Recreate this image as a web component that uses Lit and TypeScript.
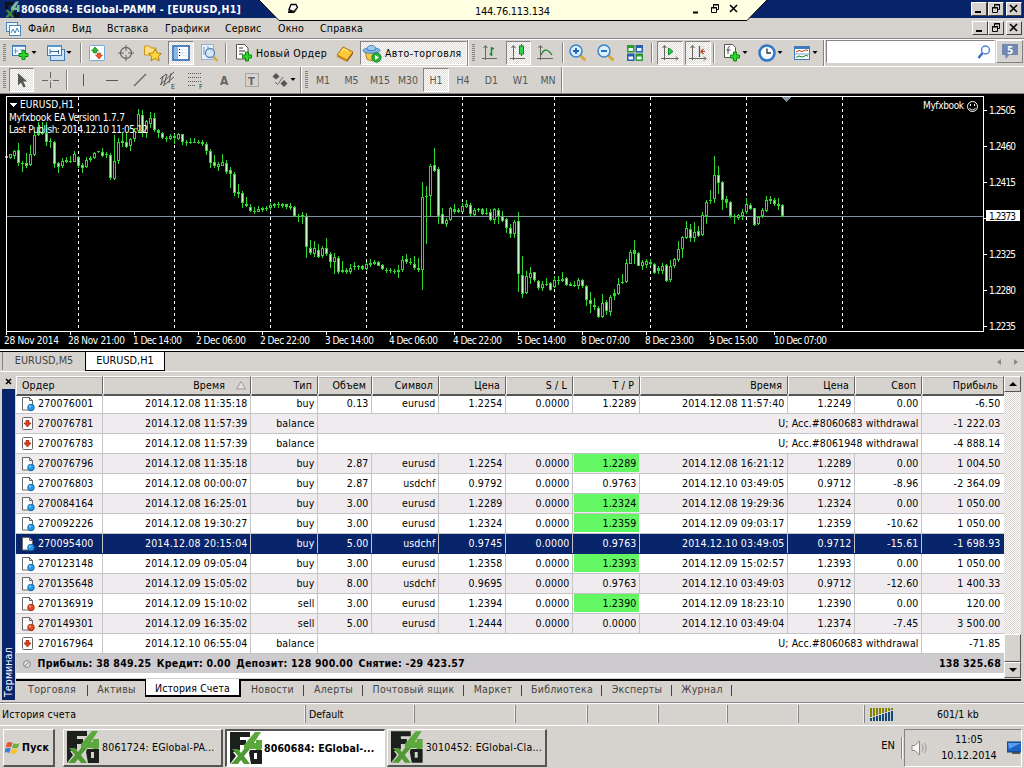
import { LitElement, html, svg, css, TemplateResult } from "lit";
import { customElement } from "lit/decorators.js";
import { classMap } from "lit/directives/class-map.js";
import { styleMap } from "lit/directives/style-map.js";

interface Order {
  id: string;
  kind: "buy" | "sell" | "balance";
  time: string;
  profit: string;
  comment?: string;
  cells?: string[]; // volume, symbol, price, s/l, t/p, close time, close price, swap
  tpHit?: boolean;
  selected?: boolean;
}

const deal = (
  id: string, kind: "buy" | "sell", time: string, cells: string[], profit: string,
  flags: Partial<Order> = {},
): Order => ({ id, kind, time, cells, profit, ...flags });

const balance = (id: string, time: string, comment: string, profit: string): Order =>
  ({ id, kind: "balance", time, comment, profit });

const ORDERS: Order[] = [
  deal("270076001", "buy", "2014.12.08 11:35:18", ["0.13", "eurusd", "1.2254", "0.0000", "1.2289", "2014.12.08 11:57:40", "1.2249", "0.00"], "-6.50"),
  balance("270076781", "2014.12.08 11:57:39", "U; Acc.#8060683 withdrawal", "-1 222.03"),
  balance("270076783", "2014.12.08 11:57:39", "U; Acc.#8061948 withdrawal", "-4 888.14"),
  deal("270076796", "buy", "2014.12.08 11:35:18", ["2.87", "eurusd", "1.2254", "0.0000", "1.2289", "2014.12.08 16:21:12", "1.2289", "0.00"], "1 004.50", { tpHit: true }),
  deal("270076803", "buy", "2014.12.08 00:00:07", ["2.87", "usdchf", "0.9792", "0.0000", "0.9763", "2014.12.10 03:49:05", "0.9712", "-8.96"], "-2 364.09"),
  deal("270084164", "buy", "2014.12.08 16:25:01", ["3.00", "eurusd", "1.2289", "0.0000", "1.2324", "2014.12.08 19:29:36", "1.2324", "0.00"], "1 050.00", { tpHit: true }),
  deal("270092226", "buy", "2014.12.08 19:30:27", ["3.00", "eurusd", "1.2324", "0.0000", "1.2359", "2014.12.09 09:03:17", "1.2359", "-10.62"], "1 050.00", { tpHit: true }),
  deal("270095400", "buy", "2014.12.08 20:15:04", ["5.00", "usdchf", "0.9745", "0.0000", "0.9763", "2014.12.10 03:49:05", "0.9712", "-15.61"], "-1 698.93", { selected: true }),
  deal("270123148", "buy", "2014.12.09 09:05:04", ["3.00", "eurusd", "1.2358", "0.0000", "1.2393", "2014.12.09 15:02:57", "1.2393", "0.00"], "1 050.00", { tpHit: true }),
  deal("270135648", "buy", "2014.12.09 15:05:02", ["8.00", "usdchf", "0.9695", "0.0000", "0.9763", "2014.12.10 03:49:03", "0.9712", "-12.60"], "1 400.33"),
  deal("270136919", "sell", "2014.12.09 15:10:02", ["3.00", "eurusd", "1.2394", "0.0000", "1.2390", "2014.12.09 18:23:10", "1.2390", "0.00"], "120.00", { tpHit: true }),
  deal("270149301", "sell", "2014.12.09 16:35:02", ["5.00", "eurusd", "1.2444", "0.0000", "0.0000", "2014.12.10 03:49:04", "1.2374", "-7.45"], "3 500.00"),
  balance("270167964", "2014.12.10 06:55:04", "U; Acc.#8060683 withdrawal", "-71.85"),
];

// high, body top, body bottom, low (three units per pixel), then u/d for a hollow/solid body
const CANDLES = `
190 194 200 204,186 188 200 202 u,176 178 192 202 u,153 175 214 223 d,208 213 215 240,185 213 222 230 d,
160 188 220 222 u,118 130 190 194 u,92 122 130 134,90 122 126 130,90 125 150 162 d,140 148 152 168,
147 150 216 230 d,212 214 227 245 d,198 207 224 228 u,197 205 210 214,192 207 211 213,177 187 211 212 u,
192 195 222 228 d,214 221 228 245 d,196 205 226 230 u,193 198 205 212,180 184 200 202 u,177 178 182 184,
170 180 192 196 d,180 187 191 198,184 189 258 264 d,130 207 262 264 u,140 150 207 216 u,122 149 153 167,
122 152 166 170 d,138 142 164 178 u,110 118 142 152 u,52 66 118 124 u,54 70 125 136 d,84 88 124 140 u,
60 80 96 108 u,64 80 116 120 d,112 116 124 138,120 124 138 142 d,132 138 141 150,128 132 142 144 u,
126 134 140 156,124 128 142 146 u,126 128 150 160 d,144 150 154 162,140 151 153 158,138 150 153 153,
144 150 153 156,145 150 158 162,152 156 178 190 d,172 178 214 230 d,190 212 224 228 d,212 218 226 238 u,
188 212 222 224 u,204 214 240 246 d,226 236 248 288 d,240 246 304 314 d,276 302 306 320,298 304 334 350 d,
316 336 344 346 d,338 346 358 362 d,346 358 360 366,342 352 360 362 u,346 350 354 362,344 350 352 358,
334 340 350 354 u,334 338 342 350,332 338 340 350,334 338 342 348,336 338 346 352,334 344 348 354,
342 346 374 376 d,366 372 376 390,360 370 374 398,364 372 466 498 d,444 468 484 490 d,448 468 488 496 u,
458 474 496 500 d,462 468 494 498 u,440 470 488 492 d,482 486 510 530 d,484 496 510 546 u,494 498 542 546 d,
508 536 541 544,530 536 541 548,518 528 541 546 u,510 524 526 536,520 523 526 534,520 524 532 534,
512 518 532 534 u,502 515 519 526,506 512 516 520,508 512 522 524 d,516 520 532 536 d,530 534 538 544,
528 536 539 544,532 537 539 546,520 536 540 560,494 504 536 540 u,488 502 512 518 d,498 512 514 520,
494 516 530 536 d,500 530 534 540,272 316 534 596 u,282 313 316 456,218 222 314 374 u,170 220 238 240 d,
226 232 372 398 d,348 368 396 398 d,378 384 398 406 u,346 350 386 388 u,338 352 360 366,350 356 360 364,
334 342 360 362 u,326 336 346 350 u,334 340 368 374 d,350 354 370 374 u,348 351 354 362,350 352 366 370,
350 364 368 370,352 362 386 388 d,350 352 386 396 u,348 354 372 398 d,358 372 388 392 d,378 382 410 424 d,
396 410 428 440 d,386 390 426 440 u,360 388 548 602 d,492 550 606 620 d,538 554 604 608 u,526 544 558 578 u,
540 542 566 570 d,564 568 590 596 d,568 576 588 598 u,558 576 580 584,570 574 596 598 d,552 566 586 588 u,
554 564 568 580,542 562 568 570,556 560 580 582 d,570 578 582 584,568 580 583 586,558 564 584 592 u,
562 566 584 590 d,580 584 624 644 d,600 624 636 664 d,620 640 646 656,644 648 676 678 d,606 634 676 680 u,
624 630 658 670 d,610 616 662 674 u,592 604 614 624,560 576 606 610 u,546 570 574 576,502 514 570 574 u,
476 480 516 518 u,444 476 486 518,482 484 522 524 d,506 510 522 536 u,502 508 520 528 u,502 510 516 522,
514 518 544 546 d,524 530 538 546,514 522 538 546 u,518 520 568 570 d,506 522 566 570 u,498 502 524 530 u,
448 472 506 510 u,432 436 472 500 u,388 408 438 442 u,396 412 438 452 d,390 420 440 450 u,404 418 434 436 d,
362 370 430 432 u,326 330 374 398 u,296 324 328 338,192 250 322 334 u,224 250 274 306 d,268 270 324 354 d,
314 322 334 350,328 332 372 378 d,366 372 376 396,368 370 380 386 u,352 360 374 384 u,320 336 362 366 u,
334 340 352 356 d,348 350 400 402 d,372 376 396 400 u,348 354 374 378 u,312 324 358 360 u,312 322 328 336,
318 324 338 342 d,320 338 342 354,338 340 374 376 d`.trim().split(",").map((c) => c.trim().split(" "));

// label, x, width
const CHART_DATES: [string, number, number][] = [
  ["28 Nov 2014", 4, 55], ["28 Nov 21:00", 68, 57], ["1 Dec 14:00", 133, 49], ["2 Dec 06:00", 196, 50],
  ["2 Dec 22:00", 260, 50], ["3 Dec 14:00", 325, 49], ["4 Dec 06:00", 389, 49], ["4 Dec 22:00", 453, 49],
  ["5 Dec 14:00", 517, 49], ["8 Dec 07:00", 581, 49], ["8 Dec 23:00", 645, 49], ["9 Dec 15:00", 709, 49],
  ["10 Dec 07:00", 774, 53],
];
const PRICES = ["1.2505", "1.2460", "1.2415", "1.2370", "1.2325", "1.2280", "1.2235"];
const DAY_LINES = [78, 174, 270, 366, 462, 554, 650, 746, 842];

const caret = svg`<path d="M20.5 8h5L23 11z" fill="#000"/>`;
const plus = (x: number, y: number) => svg`
  <path transform="translate(${x} ${y})" d="M3.5 .5h3v3h3v3h-3v3h-3v-3h-3v-3h3z" fill="#2fd52f" stroke="#0a8a0a"/>`;

// Toolbar glyphs on a 20x20 grid
const ICONS: Record<string, TemplateResult> = {
  newChart: svg`<rect x="1.5" y="2.5" width="13" height="10" fill="#eef7ff" stroke="#3c7ab8"/><path d="M1 3h14" stroke="#3c7ab8" stroke-width="1.500"/><path d="M4.500 5.500v5M3 8h4M9 7h4" stroke="#6f9cc6"/>${plus(7.5, 7)}`,
  profiles: svg`<rect x="4.500" y="6.500" width="14" height="11" fill="#cfe4f7" stroke="#3c7ab8"/><rect x="1.500" y="2.500" width="14" height="10" fill="#f3f9ff" stroke="#3c7ab8"/><path d="M1 3h15" stroke="#5b95cd" stroke-width="2"/><path d="M4 6v5M4 8.500h9M12.500 7v4" stroke="#3f6d9c" fill="none"/>`,
  market: svg`<rect x="2.500" y="2.500" width="15" height="15" rx="1" fill="#fff" stroke="#74a9dc"/><path d="M8 4l3.500 4H9.500v2h-3V8h-2z" fill="#28b428" stroke="#0c7c0c" stroke-width=".6"/><path d="M12 16l-3.500-4h2v-2h3v2h2z" fill="#ee5a2c" stroke="#b22b0a" stroke-width=".6"/>`,
  target: svg`<g fill="none" stroke="#666"><circle cx="10" cy="10" r="5.500" stroke-width="1.300"/><path d="M10 2v6M10 12v6M2 10h6M12 10h6"/></g>`,
  folder: svg`<path d="M1.500 3h5l1.500 2h5v7h-11.500z" fill="#ffe08a" stroke="#c79420"/><path d="M12 6l2 4 4.500.5-3.300 3 1 4.300-4.200-2.300-4.100 2.300.9-4.300-3.200-3 4.400-.5z" fill="#ffd83a" stroke="#b8860b"/>`,
  navigator: svg`<rect x="2" y="3" width="16" height="14" fill="#fff" stroke="#2a66b4" stroke-width="1.600"/><path d="M3 4h4v12H3z" fill="#8ab9ea"/><path d="M9 7h7M9 9.500h7M9 12h7" stroke="#d6e3f2"/><path d="M8.500 6v1M8.500 9v1M8.500 12v1" stroke="#000"/>`,
  tester: svg`<rect x="2.500" y="1.500" width="12" height="15" fill="#e8f2fc" stroke="#8eb3d8"/><path d="M5 4v8M9 3v5M12 5v4" stroke="#6c93bb"/><circle cx="11" cy="10" r="4.500" fill="#cfe6f8" fill-opacity=".8" stroke="#5e88b4" stroke-width="1.300"/><path d="M14.500 13.500l4 4.500" stroke="#d9a93a" stroke-width="2.500"/>`,
  order: svg`<path d="M2.500 1.500h8l3.500 3.500v11h-11.500z" fill="#fff" stroke="#555"/><path d="M5 5h4M5 8h6M5 11h4" stroke="#333"/>${plus(8, 8.500)}`,
  book: svg`<path d="M2 12l6-8 10 5-6 8z" fill="#ffc93c" stroke="#a96f0c"/><path d="M2 12l10 5v2L2 14z" fill="#c88a1c"/><path d="M12 17l6-8v2l-6 8z" fill="#8f5f12"/><path d="M6 9l3-3 4 2" stroke="#fff0b0" fill="none"/>`,
  auto: svg`<path d="M3 8l2 8c2 2 7 2 9 0l1-8z" fill="#f6c944" stroke="#b28213"/><ellipse cx="9.500" cy="7.500" rx="8.500" ry="2.800" fill="#7fb6e6" stroke="#4b86bb"/><path d="M5 6.500C5 1 14 1 14 6.500c-2 1.500-7 1.500-9 0z" fill="#9acbf2" stroke="#4b86bb"/><circle cx="14.500" cy="14.500" r="4.600" fill="#24b33b" stroke="#0b7c1e"/><path d="M13 12v5l4-2.500z" fill="#fff"/>`,
  bars: svg`<path d="M5.500 3v14M2 15.500h15M3.500 5l2-2.500 2 2.500" stroke="#666" fill="none"/><path d="M11.500 4v9M9.500 11h2M11.500 5.500h2.500" stroke="#0d8a28" stroke-width="1.500" fill="none"/>`,
  candles: svg`<path d="M4.500 3v14M1 15.500h15M2.500 5l2-2.500 2 2.500" stroke="#666" fill="none"/><path d="M12.500 1v12" stroke="#0d8a28"/><rect x="10.500" y="3" width="4" height="8" fill="#2fd54a" stroke="#0d8a28"/>`,
  line: svg`<path d="M4.500 3v14M1 15.500h16M2.500 5l2-2.500 2 2.500" stroke="#666" fill="none"/><path d="M5 12C8 5 12 6 16 12" stroke="#0d8a28" fill="none" stroke-width="1.200"/>`,
  zoomIn: svg`<path d="M12.500 12.500l5 5" stroke="#d9a93a" stroke-width="3"/><circle cx="8" cy="8" r="6" fill="#d8efff" stroke="#3c84cc" stroke-width="1.500"/><path d="M8 5v6M5 8h6" stroke="#1c5fb0" stroke-width="1.800"/>`,
  zoomOut: svg`<path d="M12.500 12.500l5 5" stroke="#d9a93a" stroke-width="3"/><circle cx="8" cy="8" r="6" fill="#d8efff" stroke="#3c84cc" stroke-width="1.500"/><path d="M5 8h6" stroke="#1c5fb0" stroke-width="1.800"/>`,
  tile: svg`<path d="M2 2h7.500v7.500H2zM10.500 10.500H18V18h-7.500z" fill="#2c9a32"/><path d="M10.500 2H18v7.500h-7.500zM2 10.500h7.500V18H2z" fill="#285fae"/><path d="M3.500 5h4.500v3H3.500zM12 5h4.500v3H12zM3.500 13.500h4.500v3H3.500zM12 13.500h4.500v3H12z" fill="#f2f8ff"/>`,
  scroll: svg`<path d="M4.500 3v14M1 15.500h17M2.500 5l2-2.500 2 2.500M16 13.500l2 2-2 2" stroke="#666" fill="none"/><path d="M8.500 5v7l4.500-3.500z" fill="#35c84c" stroke="#0d8a28"/>`,
  shift: svg`<path d="M4.500 3v14M1 15.500h17M2.500 5l2-2.500 2 2.500M16 13.500l2 2-2 2" stroke="#666" fill="none"/><path d="M11.500 3v11" stroke="#28649c" stroke-width="1.300"/><path d="M17 8.500h-4M15.500 6L13 8.500l2.500 2.500" stroke="#b8401c" stroke-width="1.200" fill="none"/>`,
  indicators: svg`<path d="M2.500 1.500h8l3 3v10h-11z" fill="#fff" stroke="#555"/><path d="M8 4c-2-1-2 1-2 3v4M4.500 7h4" stroke="#444" fill="none"/>${plus(8, 8.500)}`,
  clock: svg`<circle cx="10" cy="10" r="7.500" fill="#f4faff" stroke="#2c75c8" stroke-width="2.500"/><path d="M10 5.500V10h4" stroke="#333" fill="none" stroke-width="1.300"/>`,
  template: svg`<rect x="2.500" y="3.500" width="15" height="13" fill="#fff" stroke="#3c7ab8"/><path d="M2 4.500h16" stroke="#3c7ab8" stroke-width="3"/><path d="M3 11h14" stroke="#7ba4cc"/><path d="M4 9l3-1.500 3 1 4-1.500 2 .5" stroke="#b8401c" fill="none"/><path d="M4 14.500l3-1.500 3 1 4-1.500 2 .5" stroke="#0d8a28" fill="none"/>`,
  cursor: svg`<path d="M6 3v12.500l3-3 2.500 5 2.200-1-2.500-5h4z" fill="#555"/>`,
  cross: svg`<path d="M10.500 2v6M10.500 12v6M2 10.500h6M13 10.500h6M10 10.500h1" stroke="#666"/>`,
  vline: svg`<path d="M10.500 4v12" stroke="#555"/>`,
  hline: svg`<path d="M4 10.500h12" stroke="#555"/>`,
  trend: svg`<path d="M4 16L16 4" stroke="#666" stroke-width="1.200"/>`,
  channel: svg`<path d="M2 15L16 2M2 9l6-5M5 16l11-9M5 6l-2 9M9 4L6 15M13 3l-2 10" stroke="#555" fill="none"/><text x="13" y="19" font-size="7" fill="#333">E</text>`,
  fibo: svg`<path d="M2 3.500h14M2 7.500h14M2 11.500h14M2 15.500h8" stroke="#555" stroke-dasharray="1 1"/><text x="13" y="19" font-size="7" fill="#333">F</text>`,
  letter: svg`<text x="6" y="15" font-size="12" font-weight="bold" fill="#666">A</text>`,
  label: svg`<rect x="3.500" y="3.500" width="13" height="13" fill="none" stroke="#777" stroke-dasharray="1 1"/><text x="6" y="14.500" font-size="11" font-weight="bold" fill="#666">T</text>`,
  arrows: svg`<path d="M6 3l3.500 3.500L6 9.500 2.500 6.500z" fill="#555"/><path d="M14 10l3.500 3.500L14 17l-3.500-3.500z" fill="#555"/><path d="M5 12l2.500 2.500L13 7" stroke="#666" fill="none"/>`,
};

const icon = (name: string, withCaret = false) => html`
  <svg width=${withCaret ? 26 : 20} height="20" viewBox="0 0 ${withCaret ? 26 : 20} 20">
    ${ICONS[name]}${withCaret ? caret : ""}
  </svg>`;

// [glyph, cell width, modifiers: c = caret, p = pressed]; "|" separator, "grip", "end" and "" are structural
type Tool = [string, number, string?];

const MAIN_TOOLS_A: Tool[] = [
  ["grip", 9], ["newChart", 30, "c"], ["profiles", 40, "c"], ["|", 4], ["market", 28], ["target", 30],
  ["folder", 24], ["", 3], ["navigator", 26, "p"], ["tester", 30], ["|", 4],
];
const MAIN_TOOLS_B: Tool[] = [
  ["end", 2], ["grip", 9], ["bars", 24], ["", 4], ["candles", 25, "p"], ["line", 30], ["|", 4], ["zoomIn", 26],
  ["zoomOut", 30], ["tile", 28], ["|", 6], ["", 2], ["scroll", 26, "p"], ["", 2], ["shift", 26, "p"], ["|", 6],
  ["indicators", 36, "c"], ["clock", 33, "c"], ["template", 37, "c"], ["end", 2],
];
const LINE_TOOLS: Tool[] = [
  ["grip", 9], ["cursor", 25, "p"], ["cross", 31], ["|", 4], ["vline", 28], ["hline", 29], ["trend", 27],
  ["channel", 29], ["fibo", 28], ["letter", 28], ["label", 28], ["arrows", 34, "c"], ["end", 2], ["grip", 8],
];
const PERIODS: [string, number][] = [
  ["M1", 26], ["M5", 31], ["M15", 26], ["M30", 30], ["H1", 26], ["H4", 28], ["D1", 29], ["W1", 29], ["MN", 26],
];

const renderTools = (tools: Tool[]) => tools.map(([name, width, mods = ""]) => {
  const structural = name === "" || name === "|" || name === "grip" || name === "end";
  return html`<div
    class=${classMap({
      tool: true, sep: name === "|", grip: name === "grip", end: name === "end", pressed: mods.includes("p"),
    })}
    style=${styleMap({ width: `${width}px` })}>${structural ? "" : icon(name, mods.includes("c"))}</div>`;
});

const windowButtons = () => html`
  <div class="winbtns">
    <span class="wb"><svg width="12" height="10"><path d="M2 8h6" stroke="#000" stroke-width="2"/></svg></span>
    <span class="wb"><svg width="12" height="10"><path d="M4.500 3V.5h5v5h-2M4 1h6M2.500 3.500h5v5h-5zM2 4h6" fill="none" stroke="#000"/></svg></span>
    <span class="wb last"><svg width="12" height="10"><path d="M2 1l7 7M9 1L2 8" stroke="#000" stroke-width="1.600"/></svg></span>
  </div>`;

const logo = () => html`
  <svg class="logo" width="32" height="32" viewBox="0 0 32 32">
    <path d="M0 0h20v5H10v3h6v5h-6v5l-3 2H0z" fill="#1c201c"/>
    <path d="M25 0h6l-7 11h2V8h6v9h-1v3h-5v-3H14v-4z" fill="#5ba83c"/>
    <path d="M19 21h5v6h3v-6h5v11H21z" fill="#1c201c"/>
    <path d="M2 17h6l3 4 3-4h6l-6 7 6 8h-6l-3-4-3 4H1l7-8z" fill="#4f9a35"/>
    <path d="M0 20h3l3 4-6 8zM20 18h12v3H19z" fill="#1c201c"/>
  </svg>`;

const orderIcon = (kind: Order["kind"]) => kind === "balance"
  ? html`<svg class="oicon" width="14" height="16"><rect x="1.500" y="1.500" width="10" height="12" rx="1" fill="#fff" stroke="#666"/><path d="M5 4.500h3v2.500h2L6.500 11 3 7h2z" fill="#e2401c" stroke="#8e2008" stroke-width=".7"/></svg>`
  : html`<svg class="oicon" width="14" height="16"><path d="M1.500 1.500h7l3 3v9.500h-10z" fill="#fff" stroke="#666"/><path d="M8.500 1.500v3h3" fill="none" stroke="#666"/><circle cx="10" cy="11.500" r="3.300" fill=${kind === "buy" ? "#1f9be8" : "#e04a1c"} stroke=${kind === "buy" ? "#0b5c96" : "#962606"} stroke-width=".8"/><circle cx="9" cy="10.500" r="1" fill="#fff" opacity=".6"/></svg>`;

@customElement("price-chart")
export class PriceChart extends LitElement {
  static styles = css`
    :host { display: block; }
    svg { display: block; }
    text {
      font: 10px "DejaVu Sans Condensed", "DejaVu Sans", sans-serif;
      fill: #fff;
    }
    .last-price { fill: #000; }
  `;

  private candle(c: string[], i: number) {
    const [high, top, bottom, low] = c.slice(0, 4).map((v) => Math.floor(Number(v) / 3) - 2);
    const x = 6 + i * 4;
    const h = Math.max(1, bottom - top);
    return svg`
      <rect x=${x} y=${high} width="1" height=${low - high}></rect>
      <rect x=${x - 1} y=${top} width="3" height=${h}></rect>
      ${c[4] && h > 2
        ? svg`<rect x=${x} y=${top + 1} width="1" height=${h - 2} fill=${c[4] === "u" ? "#000" : "#c0ffc0"}></rect>`
        : ""}`;
  }

  render() {
    return html`
      <svg width="1022" height="255" viewBox="0 0 1022 255" shape-rendering="crispEdges">
        <rect width="1022" height="255" fill="#000"/>
        ${DAY_LINES.map((x) => svg`<path d="M${x}.5 3V237" stroke="#fff" stroke-dasharray="3 3"/>`)}
        <path d="M6 122.500H983" stroke="#8090a0"/>
        <g fill="#32d832">${CANDLES.map((c, i) => this.candle(c, i))}</g>
        <path d="M6.500 2.500H983.500V237.500H6.500z" fill="none" stroke="#fff"/>
        <path d="M781 3h10l-5 5z" fill="#8090a0"/>
        ${CHART_DATES.map(([label, x, w], i) => svg`
          <path d="M${6.5 + i * 64} 238v3" stroke="#fff"/>
          <text x=${x} y="250" textLength=${w}>${label}</text>`)}
        ${PRICES.map((p, i) => svg`
          <path d="M984 ${16.5 + i * 36}h3" stroke="#fff"/>
          ${p === "1.2370" ? "" : svg`<text x="989" y=${20 + i * 36} textLength="27">${p}</text>`}`)}
        <rect x="986" y="116" width="34" height="11" fill="#fff"/>
        <text class="last-price" x="989" y="125.500" textLength="27">1.2373</text>
        <path d="M9 9h8l-4 4z" fill="#fff"/>
        <text x="20" y="14" textLength="54">EURUSD,H1</text>
        <text x="9" y="27" textLength="116">Myfxbook EA Version 1.7.7</text>
        <text x="9" y="39" textLength="139">Last Publish: 2014.12.10 11:05:12</text>
        <text x="923" y="15" textLength="41">Myfxbook</text>
        <g fill="none" stroke="#fff" shape-rendering="auto">
          <circle cx="972.500" cy="12.500" r="5"/><path d="M969.500 14c1.500 2.500 4.500 2.500 6 0"/>
          <path d="M970.500 10v2M974.500 10v2"/>
        </g>
      </svg>`;
  }
}

@customElement("order-history")
export class OrderHistory extends LitElement {
  static styles = css`
    :host { display: flex; min-width: 0; height: 302px; background: #fff; }
    .table { width: 988px; }
    .row, .head {
      display: grid;
      grid-template-columns: 87px 148px 67px 54px 67px 67px 67px 67px 148px 67px 67px 82px;
    }
    .head { height: 18px; background: #d6d3ce; }
    .head > div {
      box-sizing: border-box;
      padding: 0 5px;
      text-align: right;
      line-height: 17px;
      border: 1px solid;
      border-color: #fff #666 #555 #fff;
      border-bottom-width: 2px;
      box-shadow: inset 0 1px #b5b2ad;
      letter-spacing: 0.15px;
    }
    .head > div:first-child { text-align: left; }
    .head svg { margin: 0 -1px 0 11px; vertical-align: -1px; }
    .row {
      height: 20px;
      line-height: 19px;
      box-sizing: border-box;
      border-bottom: 1px solid #c6c3c6;
      letter-spacing: 0.16px;
    }
    .row:nth-child(odd) { background: #efebef; }
    .row > div {
      box-sizing: border-box;
      padding-right: 2.5px;
      text-align: right;
      border-right: 1px solid #c6c3c6;
      white-space: nowrap;
    }
    .row > div:last-child { border-right: 0; padding-right: 3.5px; }
    .row > .id { display: flex; align-items: center; padding-left: 5px; text-align: left; }
    .oicon { margin-right: 3px; }
    .row > .comment { grid-column: span 8; letter-spacing: 0.1px; }
    .row .hit {
      padding-right: 1.5px;
      margin: 0 1px 1px 1px;
      background: #63f763;
      border-right-color: #63f763;
      line-height: 18px;
    }
    .row.selected { background: #08246b; color: #fff; border-color: #08246b; }
    .summary {
      display: flex;
      gap: 5.5px;
      height: 19px;
      padding: 0 3px 0 6px;
      line-height: 18px;
      background: #cecbce;
      font-weight: bold;
      letter-spacing: 0.25px;
    }
    .summary .total { margin-left: auto; }
    .summary svg { margin: 5px 0 0; }

    .scroll {
      display: flex;
      flex-direction: column;
      width: 17px;
      background: repeating-conic-gradient(#fff 0 25%, #d6d3ce 0 50%) 0 0 / 2px 2px;
    }
    .scroll div {
      box-sizing: border-box;
      background: #d6d3ce;
      border: 1px solid;
      border-color: #fff #555 #555 #fff;
      display: grid;
      place-items: center;
    }
    .up, .down { height: 16px; }
    .thumb { height: 28px; margin-top: auto; }
  `;

  private row(o: Order) {
    return html`
      <div class=${classMap({ row: true, selected: !!o.selected })}>
        <div class="id">${orderIcon(o.kind)}<span>${o.id}</span></div>
        <div>${o.time}</div>
        <div>${o.kind}</div>
        ${o.cells
          ? o.cells.map((c, i) => html`<div class=${classMap({ hit: i === 4 && !!o.tpHit })}>${c}</div>`)
          : html`<div class="comment">${o.comment}</div>`}
        <div>${o.profit}</div>
      </div>`;
  }

  render() {
    return html`
      <div class="table">
        <div class="head">
          <div>Ордер</div>
          <div>Время<svg width="10" height="9"><path d="M.5 8L5 .5 9.500 8z" fill="#e4e2de" stroke="#999"/></svg></div>
          <div>Тип</div><div>Объем</div><div>Символ</div><div>Цена</div><div>S / L</div><div>T / P</div>
          <div>Время</div><div>Цена</div><div>Своп</div><div>Прибыль</div>
        </div>
        ${ORDERS.map((o) => this.row(o))}
        <div class="summary">
          <svg width="10" height="10"><circle cx="5" cy="5" r="3.500" fill="#ddd" stroke="#888"/><path d="M3 7l4-4" stroke="#888"/></svg>
          <span>Прибыль: 38 849.25</span><span>Кредит: 0.00</span><span>Депозит: 128 900.00</span><span>Снятие: -29 423.57</span>
          <span class="total">138 325.68</span>
        </div>
      </div>
      <div class="scroll">
        <div class="up"><svg width="8" height="4"><path d="M0 4L4 0 8 4z"/></svg></div>
        <div class="thumb"></div>
        <div class="down"><svg width="8" height="4"><path d="M0 0h8L4 4z"/></svg></div>
      </div>`;
  }
}

@customElement("app-root")
export class AppRoot extends LitElement {
  static styles = css`
    :host {
      display: flex;
      flex-direction: column;
      width: 1024px;
      height: 768px;
      overflow: hidden;
      position: relative;
      background: #d6d3ce;
      color: #000;
      font: 10.5px "DejaVu Sans Condensed", "DejaVu Sans", sans-serif;
      cursor: default;
    }
    * { box-sizing: border-box; }
    svg { display: block; }

    /* title + menu */
    .title {
      display: flex;
      align-items: center;
      height: 18px;
      padding: 0 2px 0 4px;
      background: #08246b;
      color: #fff;
      font-weight: bold;
    }
    .title span:nth-child(2) { margin-left: 1px; letter-spacing: 0.28px; }
    .winbtns { display: flex; margin-left: auto; }
    .wb {
      width: 16px;
      height: 14px;
      background: #d6d3ce;
      border: 1px solid;
      border-color: #fff #404040 #404040 #fff;
      padding: 1px;
    }
    .wb.last { margin-left: 2px; }
    .menu {
      display: flex;
      align-items: center;
      height: 21px;
      padding: 0 2px 0 6px;
      border-bottom: 1px solid #848284;
      letter-spacing: 0.2px;
    }
    .menu .items { display: grid; grid-template-columns: 44px 35px 58px 60px 53px 42px 60px; margin-left: 7px; }

    .remote { position: absolute; left: 257px; top: 0; }

    /* toolbars */
    .bar { display: flex; border-top: 1px solid #fff; }
    .bar.main { height: 27px; }
    .bar.lines { height: 27px; color: #555; }
    .tool { display: flex; flex: none; align-items: center; justify-content: center; }
    .sep::before { content: ""; width: 2px; height: 20px; background: linear-gradient(90deg, #848284 50%, #fff 50%); }
    .grip::before {
      content: "";
      width: 3px;
      height: 18px;
      background: repeating-linear-gradient(#848284 0 1px, transparent 1px 2px);
    }
    .end { background: linear-gradient(90deg, #848284 50%, #fff 50%); }
    .edge { width: 2px; }
    .pressed {
      margin: 1px 0;
      border: 1px solid;
      border-color: #848284 #fff #fff #848284;
      background: repeating-conic-gradient(#fff 0 25%, #dedbd6 0 50%) 0 0 / 2px 2px;
    }
    .text-tool { display: flex; flex: none; align-items: center; gap: 3px; white-space: nowrap; }
    .order { width: 101px; padding-left: 6px; gap: 2px; letter-spacing: 0.38px; }
    .book { width: 31px; }
    .auto { width: 107px; padding-left: 1px; letter-spacing: 0.35px; }
    .search {
      display: flex;
      justify-content: flex-end;
      align-items: center;
      flex: 1;
      margin: 0 0 3px 1px;
      padding-right: 2px;
      background: #fff;
      border: 1px solid;
      border-color: #848284 #fff #fff #848284;
    }
    .chat {
      display: grid;
      place-items: center;
      width: 27px;
      margin: 0 1px 3px 1px;
      border: 1px solid;
      border-color: #fff #848284 #848284 #fff;
    }

    /* chart */
    .chart {
      height: 258px;
      border-top: 1px solid #848284;
      border-bottom: 1px solid #fff;
      padding-bottom: 1px;
      background: #d6d3ce;
    }
    .chart price-chart { background: #000; }
    .chart-tabs {
      display: flex;
      height: 20px;
      border-top: 1px solid #000;
      padding-left: 2px;
      color: #444;
      font-size: 10.8px;
    }
    .chart-tabs .tab { width: 83px; height: 18px; line-height: 17px; text-align: center; border-left: 1px solid #848284; }
    .chart-tabs .tab.on {
      width: 80px;
      height: 19px;
      color: #000;
      background: #fff;
      border: solid #000;
      border-width: 0 1px 1px 1px;
    }
    .chart-tabs svg { margin: 7px 5px 0 auto; }

    /* terminal */
    .terminal { display: grid; grid-template-columns: 14px 1005px; padding: 4px 0 0 2px; height: 331px; border-top: 1px solid #fff; }
    .side { display: flex; flex-direction: column; align-items: center; grid-row: span 2; height: 324px; }
    .side .x { height: 13px; padding-top: 2px; }
    .side .strip {
      display: flex;
      flex: 1;
      align-items: center;
      width: 13px;
      margin-right: 1px;
      background: #08246b;
      color: #fff;
      writing-mode: vertical-rl;
      transform: rotate(180deg);
      padding-top: 3px;
      line-height: 13px;
      letter-spacing: 0.1px;
    }
    .tabs { display: flex; height: 22px; border-top: 2px solid #000; color: #444; letter-spacing: 0.28px; }
    .tabs div { position: relative; text-align: center; line-height: 17px; white-space: nowrap; }
    .tabs .bar-after::after { content: ""; position: absolute; right: 0; top: 4px; height: 11px; border-right: 1px solid #444; }
    .tabs .on {
      height: 18px;
      margin-top: -2px;
      background: #fff;
      color: #000;
      border: solid #000;
      border-width: 0 2px 2px 1px;
      line-height: 19px;
      letter-spacing: 0.1px;
    }

    /* status */
    .status { display: flex; align-items: center; height: 23px; border-top: 1px solid #848284; box-shadow: inset 0 1px #fff; }
    .status div { height: 18px; line-height: 18px; padding-left: 3px; border-left: 1px solid #848284; box-shadow: -1px 0 #eee; }
    .status div:first-child { border: 0; box-shadow: none; padding-left: 2px; letter-spacing: 0.15px; }
    .status .net { display: flex; gap: 43px; padding-left: 5px; }
    .status svg { margin-top: 3px; }

    /* taskbar */
    .taskbar { display: flex; align-items: center; flex: 1; padding: 1px 2px 0 3px; border-top: 1px solid #fff; }
    .btn {
      display: flex;
      align-items: center;
      height: 38px;
      border: solid;
      border-width: 1px 2px 2px 1px;
      border-color: #fff #555 #555 #fff;
      white-space: nowrap;
    }
    .start { width: 52px; margin-right: 8px; padding-left: 1px; font-weight: bold; gap: 1px; letter-spacing: 0.25px; }
    .task { width: 160px; margin-right: 2px; padding: 0 3px; gap: 3px; letter-spacing: 0.2px; }
    .task.on {
      font-weight: bold;
      letter-spacing: 0.12px;
      border-width: 2px 1px 1px 2px;
      border-color: #555 #fff #fff #555;
      background: #fff;
      gap: 2px;
    }
    .lang { margin-left: auto; margin-right: 6px; padding-bottom: 5px; font-size: 11px; }
    .tray {
      display: flex;
      align-items: center;
      width: 118px;
      height: 38px;
      margin-left: 2px;
      padding-left: 6px;
      border: 1px solid;
      border-color: #848284 #fff #fff #848284;
    }
    .tick { height: 22px; border-left: 1px solid #848284; box-shadow: 1px 0 #fff; }
    .time { width: 85px; padding-left: 4px; text-align: center; line-height: 16px; font-size: 10.8px; }
  `;

  private renderRemoteBar() {
    return html`
      <svg class="remote" width="512" height="23" viewBox="0 0 512 23">
        <path d="M1 -1L22 20.500H490L511 -1z" fill="#ffffe1" stroke="#000"/>
        <g transform="translate(30 3)">
          <path d="M4 1.500h5l1.500 3L7 8.500 2 6.500z" fill="#fff" stroke="#000" stroke-width="1.300"/>
          <path d="M1.500 7l-.5 3h6l3.500-3.500L7 9z"/>
        </g>
        <text x="218" y="14.500" textLength="75" font-size="11">144.76.113.134</text>
        <path d="M436 12.500h5" stroke="#000" stroke-width="2"/>
        <path d="M456.500 7V4.500h5v5h-2M456 5h6M454.500 7.500h5v5h-5zM454 8h6" fill="none" stroke="#000"/>
        <path d="M473 5l7 7M480 5l-7 7" stroke="#000" stroke-width="1.600"/>
      </svg>`;
  }

  private renderMenu() {
    const items = ["Файл", "Вид", "Вставка", "Графики", "Сервис", "Окно", "Справка"];
    return html`
      <div class="menu">
        <svg width="15" height="15"><rect x=".5" y="1.500" width="11" height="9" fill="#e9f4ff" stroke="#4b86bb"/><rect x="3.500" y="4.500" width="11" height="10" fill="#fff" stroke="#4b86bb"/><path d="M5 12l2-4 2 4 2-5 2 4" fill="none" stroke="#4b86bb"/></svg>
        <div class="items">${items.map((m) => html`<span>${m}</span>`)}</div>
        ${windowButtons()}
      </div>`;
  }

  private renderToolbars() {
    return html`
      <div class="bar main">
        ${renderTools(MAIN_TOOLS_A)}
        <div class="text-tool order">${icon("order")}<span>Новый Ордер</span></div>
        <div class="tool book">${icon("book")}</div>
        <div class="text-tool auto pressed">${icon("auto")}<span>Авто-торговля</span></div>
        ${renderTools(MAIN_TOOLS_B)}
        <div class="search">
          <svg width="15" height="16"><path d="M1.500 14l4-5" stroke="#3c6cd0" stroke-width="2.500"/><circle cx="8.500" cy="6" r="4" fill="#fff" stroke="#5a82d8" stroke-width="1.500"/></svg>
        </div>
        <div class="chat">
          <svg width="18" height="17"><path d="M1 1h16v11H8l-3 4-1-4H1z" fill="#7088b4"/><text x="6" y="10.500" font-size="10" font-weight="bold" fill="#fff">5</text></svg>
        </div>
      </div>
      <div class="bar lines">
        ${renderTools(LINE_TOOLS)}
        ${PERIODS.map(([p, w]) => html`
          <div class=${classMap({ tool: true, pressed: p === "H1" })} style=${styleMap({ width: `${w}px` })}>${p}</div>`)}
        <div class="tool end edge"></div>
      </div>`;
  }

  private renderTabs() {
    const tabs: [string, number][] = [
      ["Торговля", 72], ["Активы", 57], ["История Счета", 96], ["Новости", 63], ["Алерты", 59],
      ["Почтовый ящик", 101], ["Маркет", 58], ["Библиотека", 80], ["Эксперты", 70], ["Журнал", 60],
    ];
    return html`
      <div class="tabs">
        ${tabs.map(([t, w], i) => html`
          <div class=${classMap({ on: i === 2, "bar-after": i !== 1 && i !== 2 })}
               style=${styleMap({ width: `${w}px` })}>${t}</div>`)}
      </div>`;
  }

  private renderStatus() {
    return html`
      <div class="status">
        ${[305, 109, 101, 72, 71, 69, 71, 66].map((w, i) => html`
          <div style=${styleMap({ width: `${w}px` })}>${["История счета", "Default"][i] ?? ""}</div>`)}
        <div class="net">
          <svg width="24" height="13">
            ${Array.from({ length: 8 }, (_, i) => svg`
              <rect x=${i * 3} y="0" width="2" height=${9 - i} fill="#848200"/>
              <rect x=${i * 3} y=${10 - i} width="2" height=${3 + i} fill="#10497b"/>`)}
          </svg>
          <span>601/1 kb</span>
        </div>
      </div>`;
  }

  private renderTaskbar() {
    return html`
      <div class="taskbar">
        <div class="btn start">
          <svg width="16" height="16"><path d="M2 4c2-1.500 4-1 5.500 0L6 8.500C4.500 7.500 3 7.500.8 8.500z" fill="#e8532a"/><path d="M8.500 4.300c2 1 4 1 6-.3L13 8.500c-2 1.200-4 1-6 .2z" fill="#6cb33e"/><path d="M.5 9.500c2-1 3.700-1 5.200 0L4.300 14c-1.500-1-3-1-5 0z" fill="#3c7fd8"/><path d="M6.700 9.800c2 1 4 1 6-.3L11.300 14c-2 1.200-4 1-6 .2z" fill="#f6c22c"/></svg>
          <span>Пуск</span>
        </div>
        <div class="btn task">${logo()}<span>8061724: EGlobal-PA...</span></div>
        <div class="btn task on">${logo()}<span>8060684: EGlobal-...</span></div>
        <div class="btn task">${logo()}<span>3010452: EGlobal-Cla...</span></div>
        <div class="lang">EN</div>
        <div class="tick"></div>
        <div class="tray">
          <svg width="17" height="18"><path d="M1 6.500h3L8.500 2v14L4 11.500H1z" fill="#f6f6f6" stroke="#888"/><path d="M11 5.500c1.500 2 1.500 5 0 7M13.500 4c2 3 2 7 0 10" fill="none" stroke="#999"/></svg>
          <div class="time">11:05<br>10.12.2014</div>
          <svg width="15" height="14"><rect x="0" y="1" width="15" height="10" fill="#1c62c0" stroke="#0c3a7c"/><path d="M1 2h13L2 8z" fill="#5c9cec"/><path d="M5 12h8" stroke="#333" stroke-width="1.500"/></svg>
        </div>
      </div>`;
  }

  render() {
    return html`
      <div class="title">
        <svg width="16" height="17" viewBox="0 0 32 34"><path d="M2 2h16v6h-9v8H2z" fill="#111"/><path d="M24 1h6l-8 12h4V8h5v14h-5v-4H14v-5z" fill="#7fb89c"/><path d="M3 18h6l3 4 3-4h6l-6 7 6 8h-6l-3-4-3 4H2l7-8z" fill="#3e8a3c"/><path d="M20 22h4v6h3v-6h4v11H20z" fill="#111"/></svg>
        <span>8060684: EGlobal-PAMM - [EURUSD,H1]</span>
        ${windowButtons()}
      </div>
      ${this.renderRemoteBar()}
      ${this.renderMenu()}
      ${this.renderToolbars()}
      <div class="chart"><price-chart></price-chart></div>
      <div class="chart-tabs">
        <div class="tab">EURUSD,M5</div>
        <div class="tab on">EURUSD,H1</div>
        <svg width="22" height="7"><path d="M4 0v6L0 3zM17 0v6l4-3z" fill="#8c8a86"/></svg>
      </div>
      <div class="terminal">
        <div class="side">
          <div class="x"><svg width="8" height="8"><path d="M1 1l5 5M6 1L1 6" stroke="#000" stroke-width="1.500"/></svg></div>
          <div class="strip">Терминал</div>
        </div>
        <order-history></order-history>
        ${this.renderTabs()}
      </div>
      ${this.renderStatus()}
      ${this.renderTaskbar()}`;
  }
}
